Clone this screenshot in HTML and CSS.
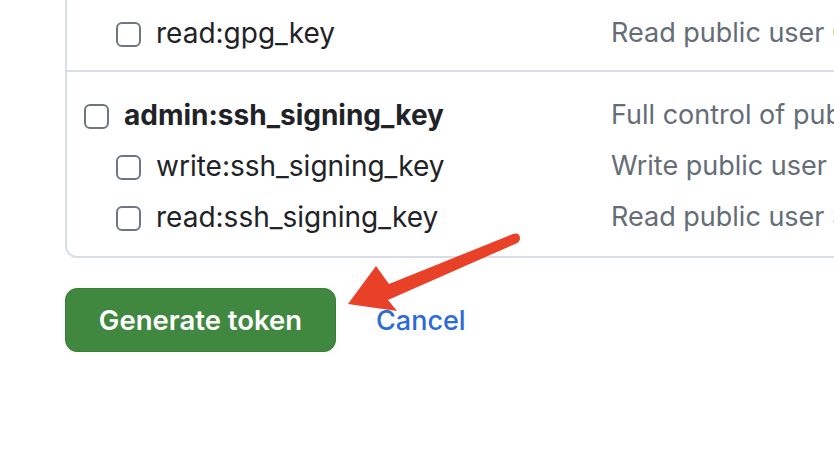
FILE: index.html
```html
<!DOCTYPE html>
<html lang="en">
<head>
<meta charset="utf-8">
<title>Scopes</title>
<link rel="stylesheet" href="styles.css">
</head>
<body>
<div class="page">
  <div class="card">
    <div class="group first">
      <div class="row sub">
        <span class="name"><span class="box"></span>read:gpg_key</span>
        <span class="desc">Read public user GPG keys</span>
      </div>
    </div>
    <div class="group">
      <div class="row top">
        <span class="name"><span class="box"></span><b>admin:ssh_signing_key</b></span>
        <span class="desc">Full control of public user SSH signing keys</span>
      </div>
      <div class="row sub">
        <span class="name"><span class="box"></span>write:ssh_signing_key</span>
        <span class="desc">Write public user SSH signing keys</span>
      </div>
      <div class="row sub">
        <span class="name"><span class="box"></span>read:ssh_signing_key</span>
        <span class="desc">Read public user SSH signing keys</span>
      </div>
    </div>
  </div>
  <div class="actions">
    <button class="btn-primary" type="button">Generate token</button>
    <a class="cancel" href="#">Cancel</a>
  </div>
</div>
<svg class="arrow" width="834" height="470" viewBox="0 0 834 470" aria-hidden="true">
  <path d="M348 304 L376 266 L389 284 L513 234 Q520 232 520 239 Q519 243 515 244 L388 300 L397 311 Z" fill="#e84128"/>
</svg>
</body>
</html>
```

FILE: styles.css
```css
html, body {
  margin: 0;
  padding: 0;
  background: #ffffff;
  overflow: hidden;
  width: 834px;
  height: 470px;
}
body {
  font-family: "Inter", "Liberation Sans", sans-serif;
  color: #1f2328;
  position: relative;
}
.page {
  padding-left: 65px;
  width: 1100px;
}
.card {
  margin-top: -15px;
  width: 1000px;
  border: 2px solid #d8dee4;
  border-radius: 12px;
}
.group {
  padding: 17px 0 14px;
}
.group.first {
  padding: 20px 0 12px;
}
.group + .group {
  border-top: 2px solid #d8dee4;
}
.row {
  display: grid;
  grid-template-columns: 544px 1fr;
  height: 51px;
  align-items: center;
  white-space: nowrap;
}
.name {
  display: flex;
  align-items: center;
  font-size: 28px;
  line-height: 1;
}
.row.top .name { padding-left: 17px; }
.row.sub .name { padding-left: 49px; }
.name b { font-weight: 700; }
.box {
  box-sizing: border-box;
  width: 25px;
  height: 25px;
  border: 2px solid #6e7781;
  border-radius: 6px;
  background: #fff;
  margin-right: 15px;
  margin-top: 3px;
  flex: none;
}
.desc {
  color: #656d76;
  font-size: 27px;
  line-height: 1;
}
.actions {
  display: flex;
  align-items: center;
  gap: 40px;
  margin-top: 30px;
}
.btn-primary {
  box-sizing: border-box;
  width: 271px;
  height: 64px;
  border: 1px solid #3a7c3a;
  border-radius: 12px;
  background: #40873f;
  color: #fff;
  font-family: "Inter", "Liberation Sans", sans-serif;
  font-size: 27.5px;
  font-weight: 600;
  padding: 0;
}
.cancel {
  color: #2d6bd6;
  text-decoration: none;
  font-size: 27px;
  font-weight: 500;
}
.arrow {
  position: absolute;
  left: 0;
  top: 0;
  pointer-events: none;
}
```
